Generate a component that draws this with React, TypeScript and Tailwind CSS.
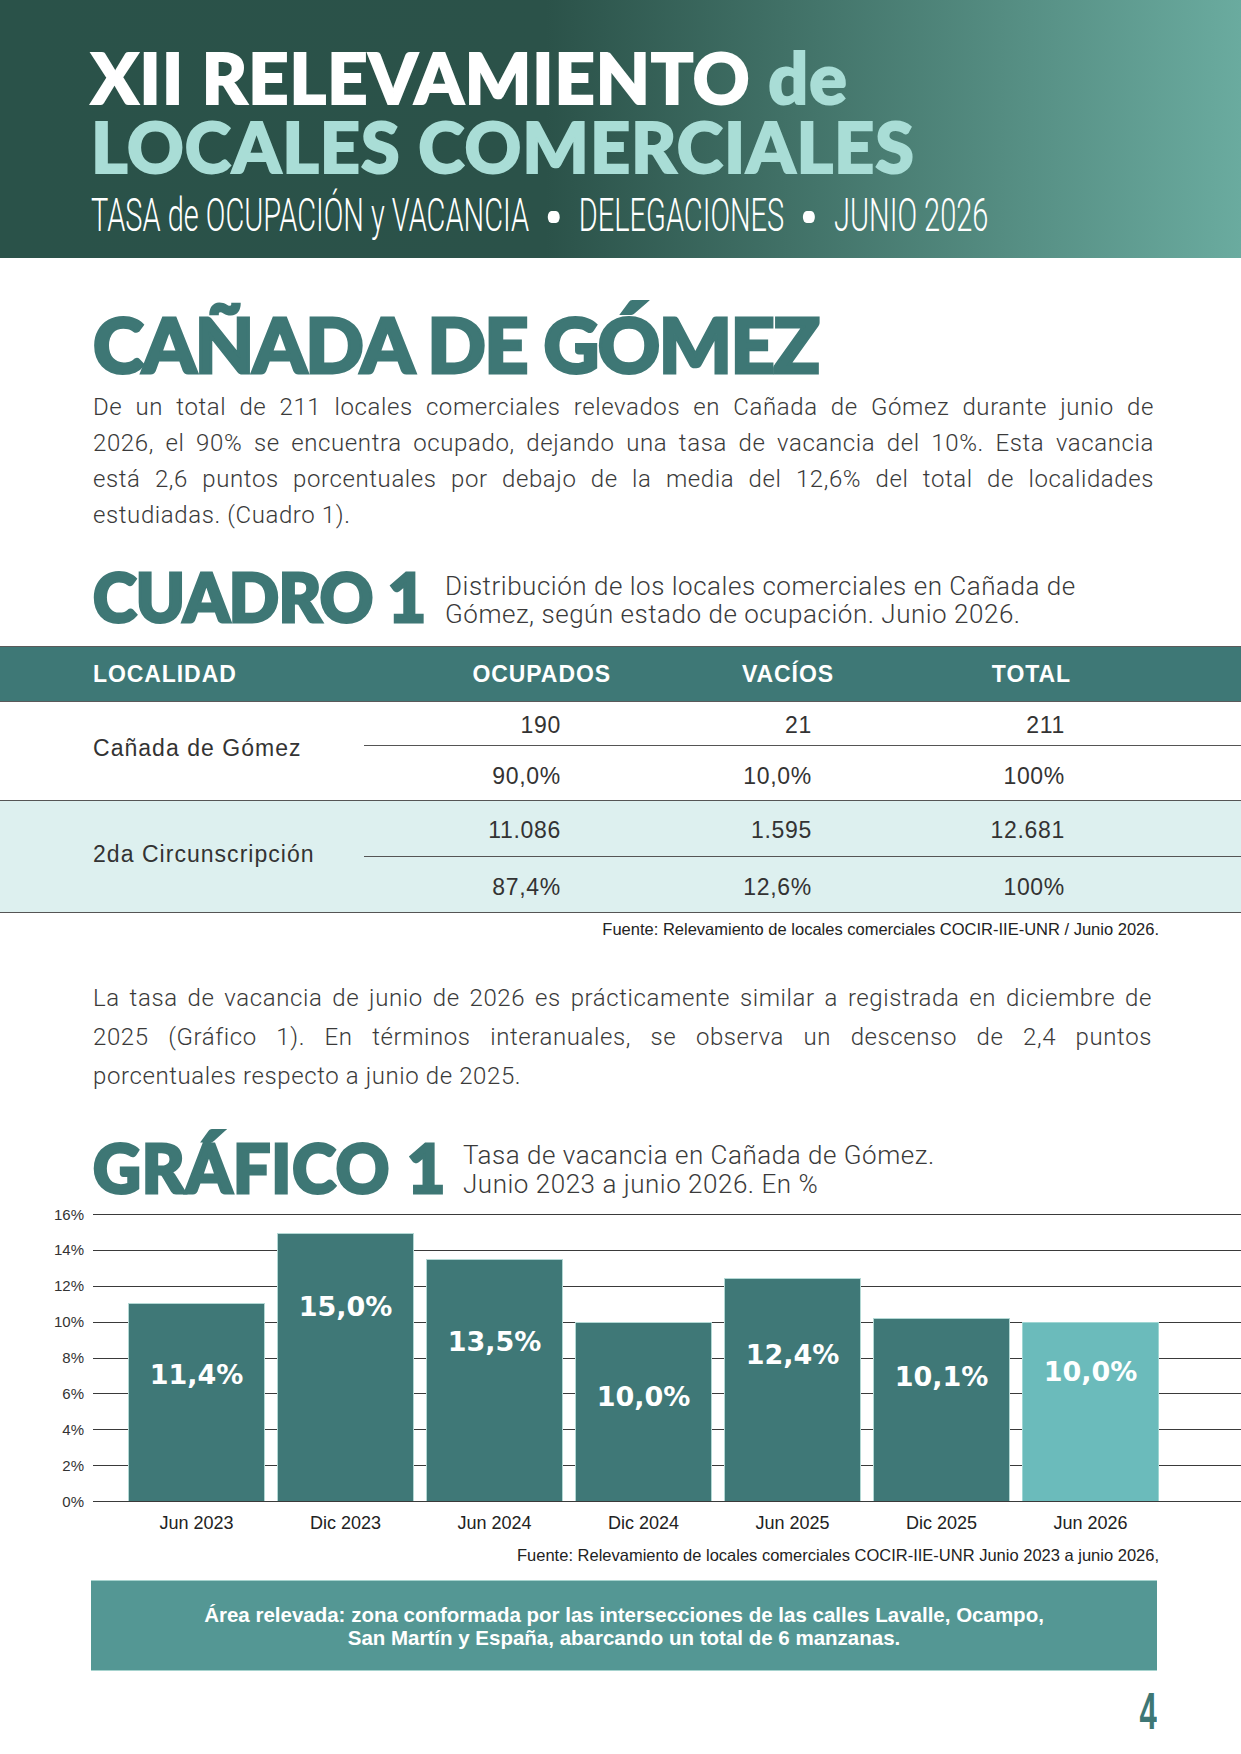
import React from "react";

const heading =
  "font-['Lato',sans-serif] font-black text-[#3e7775] [-webkit-text-stroke:3px_currentColor]";
const body = "font-['Roboto',sans-serif] font-light text-[#3a3a3a]";
const sans = "font-['Liberation_Sans',Arial,sans-serif]";

type Row = {
  label: string;
  bg: string;
  h: string;
  hTop: string;
  top: string[];
  bot: string[];
};

const rows: Row[] = [
  {
    label: "Cañada de Gómez",
    bg: "bg-white",
    h: "h-[99px]",
    hTop: "h-[44px]",
    top: ["190", "21", "211"],
    bot: ["90,0%", "10,0%", "100%"],
  },
  {
    label: "2da Circunscripción",
    bg: "bg-[#ddf0ef]",
    h: "h-[112px]",
    hTop: "h-[56px]",
    top: ["11.086", "1.595", "12.681"],
    bot: ["87,4%", "12,6%", "100%"],
  },
];

const numCols = [
  "w-[276px] pr-[79px]",
  "w-[240px] pr-[68px]",
  "w-[361px] pr-[176px]",
];

type Bar = { label: string; v: string; h: number; off: number; light?: boolean };

const bars: Bar[] = [
  { label: "Jun 2023", v: "11,4%", h: 198, off: 71 },
  { label: "Dic 2023", v: "15,0%", h: 268, off: 73 },
  { label: "Jun 2024", v: "13,5%", h: 242, off: 82 },
  { label: "Dic 2024", v: "10,0%", h: 179, off: 74 },
  { label: "Jun 2025", v: "12,4%", h: 223, off: 76 },
  { label: "Dic 2025", v: "10,1%", h: 183, off: 58 },
  { label: "Jun 2026", v: "10,0%", h: 179, off: 49, light: true },
];

const ticks = ["16%", "14%", "12%", "10%", "8%", "6%", "4%", "2%", "0%"];

function JLine({ children, last }: { children: React.ReactNode; last?: boolean }) {
  return (
    <span className={last ? "block text-left" : "block text-justify [text-align-last:justify]"}>
      {children}
    </span>
  );
}

function Dot() {
  return <span className="inline-block align-middle w-[19px] h-[12px] rounded-full bg-white mx-[30px] -mt-[4px]" />;
}

export default function App() {
  return (
    <div className="w-[1241px] h-[1754px] bg-white overflow-hidden">
      {/* Header */}
      <header className="h-[258px] bg-[linear-gradient(90deg,#2a5249_0%,#2b5249_44%,#6aab9f_100%)] pl-[91px] pt-[43px]">
        <div className="font-['Lato',sans-serif] font-black text-[70px] leading-[69px] tracking-[0.015em] whitespace-nowrap [-webkit-text-stroke:2px_currentColor]">
          <div className="text-white">
            XII RELEVAMIENTO <span className="text-[#a9ddd6]">de</span>
          </div>
          <div className="text-[#a9ddd6]">LOCALES COMERCIALES</div>
        </div>
        <div className="mt-[11px] font-['Roboto',sans-serif] font-light text-white text-[46px] leading-[46px] whitespace-nowrap">
          <span className="inline-block origin-left scale-x-[0.63]">
            TASA de OCUPACIÓN y VACANCIA
            <Dot />
            DELEGACIONES
            <Dot />
            JUNIO 2026
          </span>
        </div>
      </header>

      {/* City title */}
      <h1 className={`${heading} mt-[45px] ml-[93px] text-[77px] leading-[80px] tracking-[-0.02em] whitespace-nowrap`}>
        CAÑADA DE GÓMEZ
      </h1>

      <p className={`${body} mt-[6px] ml-[93px] w-[1061px] text-[24px] leading-[36px] tracking-[0.025em]`}>
        <JLine>De un total de 211 locales comerciales relevados en Cañada de Gómez durante junio de</JLine>
        <JLine>2026, el 90% se encuentra ocupado, dejando una tasa de vacancia del 10%. Esta vacancia</JLine>
        <JLine>está 2,6 puntos porcentuales por debajo de la media del 12,6% del total de localidades</JLine>
        <JLine last>estudiadas. (Cuadro 1).</JLine>
      </p>

      {/* Cuadro 1 title */}
      <div className="mt-[29px] ml-[93px] flex items-start">
        <div className={`${heading} w-[352px] text-[66px] leading-[69px] tracking-[-0.01em] whitespace-nowrap`}>
          CUADRO 1
        </div>
        <div className={`${body} mt-[10px] text-[26px] leading-[28px] tracking-[0.02em]`}>
          Distribución de los locales comerciales en Cañada de
          <br />
          Gómez, según estado de ocupación. Junio 2026.
        </div>
      </div>

      {/* Table */}
      <div className={`${sans} mt-[15px]`}>
        <div className="h-[56px] bg-[#3e7876] border-t border-b border-[#5a5a5a] flex items-center text-white font-bold text-[23px] tracking-[0.04em]">
          <div className="w-[364px] pl-[93px]">LOCALIDAD</div>
          <div className="w-[276px] pr-[29px] text-right">OCUPADOS</div>
          <div className="w-[240px] pr-[46px] text-right">VACÍOS</div>
          <div className="w-[361px] pr-[170px] text-right">TOTAL</div>
        </div>
        {rows.map((r) => (
          <div key={r.label} className={`${r.h} ${r.bg} border-b border-[#555] flex text-[23px] text-[#333] tracking-[0.03em]`}>
            <div className="w-[364px] pl-[93px] flex items-center pb-[5px] tracking-[0.045em]">{r.label}</div>
            <div className="flex-1 flex flex-col">
              <div className={`${r.hTop} border-b border-[#555] flex items-center pt-[3px]`}>
                {r.top.map((t, i) => (
                  <div key={i} className={`${numCols[i]} text-right`}>
                    {t}
                  </div>
                ))}
              </div>
              <div className="flex-1 flex items-center pt-[6px]">
                {r.bot.map((t, i) => (
                  <div key={i} className={`${numCols[i]} text-right`}>
                    {t}
                  </div>
                ))}
              </div>
            </div>
          </div>
        ))}
        <div className="mt-[7px] pr-[82px] text-right text-[16.5px] leading-[19px] text-[#222]">
          Fuente: Relevamiento de locales comerciales COCIR-IIE-UNR / Junio 2026.
        </div>
      </div>

      {/* Paragraph 2 */}
      <p className={`${body} mt-[40px] ml-[93px] w-[1059px] text-[24px] leading-[39px] tracking-[0.025em]`}>
        <JLine>La tasa de vacancia de junio de 2026 es prácticamente similar a registrada en diciembre de</JLine>
        <JLine>2025 (Gráfico 1). En términos interanuales, se observa un descenso de 2,4 puntos</JLine>
        <JLine last>porcentuales respecto a junio de 2025.</JLine>
      </p>

      {/* Gráfico 1 title */}
      <div className="mt-[37px] ml-[93px] flex items-start">
        <div className={`${heading} w-[370px] text-[66px] leading-[69px] tracking-[0.015em] whitespace-nowrap`}>
          GRÁFICO 1
        </div>
        <div className={`${body} mt-[8px] text-[26px] leading-[29px] tracking-[0.02em]`}>
          Tasa de vacancia en Cañada de Gómez.
          <br />
          Junio 2023 a junio 2026. En %
        </div>
      </div>

      {/* Chart */}
      <div className={`${sans} mt-[12px] relative h-[288px]`}>
        <div className="h-full flex flex-col justify-between">
          {ticks.map((t) => (
            <div key={t} className="h-px flex items-center">
              <span className="w-[84px] text-right text-[15px] leading-[16px] text-[#333]">{t}</span>
              <span className="ml-[9px] flex-1 h-px bg-[#3a3a3a]" />
            </div>
          ))}
        </div>
        <div className="absolute left-[128px] bottom-px flex items-end gap-[12px]">
          {bars.map((b) => (
            <div
              key={b.label}
              className={`w-[137px] flex flex-col items-center border-x border-t ${
                b.light ? "bg-[#6bbbbb] border-[#9fd6d3]" : "bg-[#3f7877] border-[#b3d8d4]"
              }`}
              style={{ height: b.h, paddingTop: b.off - 14 }}
            >
              <span className="font-['DejaVu_Sans',sans-serif] font-bold text-white text-[27px] leading-[27px]">
                {b.v}
              </span>
            </div>
          ))}
        </div>
      </div>
      <div className={`${sans} mt-[11px] pl-[128px] flex gap-[12px]`}>
        {bars.map((b) => (
          <div key={b.label} className="w-[137px] text-center text-[18px] leading-[20px] text-[#222]">
            {b.label}
          </div>
        ))}
      </div>
      <div className={`${sans} mt-[13px] pr-[82px] text-right text-[16.5px] leading-[19px] text-[#222]`}>
        Fuente: Relevamiento de locales comerciales COCIR-IIE-UNR Junio 2023 a junio 2026,
      </div>

      {/* Note */}
      <div
        className={`${sans} mt-[15px] ml-[91px] w-[1066px] h-[91px] bg-[#549794] border-y border-[#a6d3ce] flex flex-col justify-center items-center text-white font-bold text-[20.5px] leading-[23px] text-center`}
      >
        <div>Área relevada: zona conformada por las intersecciones de las calles Lavalle, Ocampo,</div>
        <div>San Martín y España, abarcando un total de 6 manzanas.</div>
      </div>

      <div className="mt-[14px] pr-[84px] flex justify-end">
        <span
          className={`${sans} inline-block origin-right scale-x-[0.6] font-bold text-[52px] leading-[52px] text-[#3e7775]`}
        >
          4
        </span>
      </div>
    </div>
  );
}
